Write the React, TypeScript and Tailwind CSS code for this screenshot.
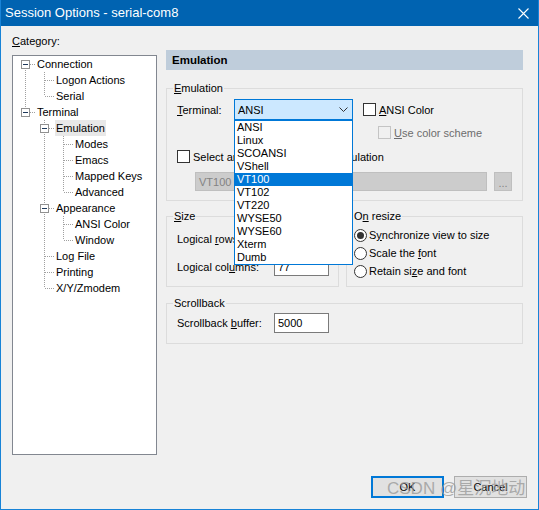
import React from 'react';

const FONT = { fontFamily: '"Liberation Sans", Arial, sans-serif' };

interface TreeRow {
  label: string;
  guides: boolean[];
  kind: 'first' | 'mid' | 'last';
  box?: boolean;
  selected?: boolean;
}

const treeRows: TreeRow[] = [
  { label: 'Connection', guides: [], kind: 'first', box: true },
  { label: 'Logon Actions', guides: [true], kind: 'mid' },
  { label: 'Serial', guides: [true], kind: 'last' },
  { label: 'Terminal', guides: [], kind: 'last', box: true },
  { label: 'Emulation', guides: [false], kind: 'mid', box: true, selected: true },
  { label: 'Modes', guides: [false, true], kind: 'mid' },
  { label: 'Emacs', guides: [false, true], kind: 'mid' },
  { label: 'Mapped Keys', guides: [false, true], kind: 'mid' },
  { label: 'Advanced', guides: [false, true], kind: 'last' },
  { label: 'Appearance', guides: [false], kind: 'mid', box: true },
  { label: 'ANSI Color', guides: [false, true], kind: 'mid' },
  { label: 'Window', guides: [false, true], kind: 'last' },
  { label: 'Log File', guides: [false], kind: 'mid' },
  { label: 'Printing', guides: [false], kind: 'mid' },
  { label: 'X/Y/Zmodem', guides: [false], kind: 'last' },
];

const terminals = ['ANSI', 'Linux', 'SCOANSI', 'VShell', 'VT100', 'VT102', 'VT220', 'WYSE50', 'WYSE60', 'Xterm', 'Dumb'];

// one 19px column of the tree's dotted connector lines
function GuideCell({ through }: { through: boolean }) {
  return (
    <svg width="19" height="16" className="shrink-0">
      {through && <line x1="8.5" y1="0" x2="8.5" y2="16" stroke="#a0a0a0" strokeDasharray="1 1" />}
    </svg>
  );
}

function NodeCell({ kind, box }: { kind: TreeRow['kind']; box?: boolean }) {
  const top = kind === 'first' ? 8 : 0;
  const bottom = kind === 'last' ? 8 : 16;
  return (
    <svg width="19" height="16" className="shrink-0">
      <line x1="8.5" y1={top} x2="8.5" y2={bottom} stroke="#a0a0a0" strokeDasharray="1 1" />
      <line x1={box ? 13 : 9} y1="8.5" x2="19" y2="8.5" stroke="#a0a0a0" strokeDasharray="1 1" />
      {box && (
        <>
          <rect x="4.5" y="4.5" width="8" height="8" fill="#fff" stroke="#919191" />
          <line x1="6" y1="8.5" x2="11" y2="8.5" stroke="#1e395b" />
        </>
      )}
    </svg>
  );
}

function Checkbox({ disabled, className }: { disabled?: boolean; className?: string }) {
  return (
    <span
      className={`inline-block w-[13px] h-[13px] shrink-0 border ${
        disabled ? 'border-[#c4c4c4] bg-[#f0f0f0]' : 'border-[#333] bg-white'
      } ${className ?? ''}`}
    />
  );
}

function Radio({ checked }: { checked?: boolean }) {
  return (
    <svg width="13" height="13" className="shrink-0">
      <circle cx="6.5" cy="6.5" r="6" fill="#fff" stroke="#333" />
      {checked && <circle cx="6.5" cy="6.5" r="3.5" fill="#333" />}
    </svg>
  );
}

function Group({ title, className, children }: { title: React.ReactNode; className?: string; children: React.ReactNode }) {
  return (
    <fieldset className={`border border-[#dcdcdc] m-0 p-0 min-w-0 ${className ?? ''}`}>
      <legend className="ml-[6px] px-[1px] leading-4">{title}</legend>
      {children}
    </fieldset>
  );
}

export default function App() {
  return (
    <div
      className="relative w-[539px] h-[510px] flex flex-col bg-[#f0f0f0] border-x border-b border-[#1883d7] text-[11px] leading-4 text-black overflow-hidden"
      style={FONT}
    >
      {/* Title bar */}
      <div className="h-[26px] shrink-0 bg-[#0063b1] flex items-center justify-between pl-[4px] pr-[9px]">
        <span className="text-white text-[13px]">Session Options - serial-com8</span>
        <svg width="11" height="11" viewBox="0 0 11 11">
          <path d="M0.5 0.5 L10.5 10.5 M10.5 0.5 L0.5 10.5" stroke="#fff" strokeWidth="1.1" />
        </svg>
      </div>

      <div className="flex pl-[11px]">
        {/* Category tree */}
        <div className="w-[145px] shrink-0">
          <div className="mt-[7px]">
            <u>C</u>ategory:
          </div>
          <div className="mt-[6px] h-[400px] bg-white border border-[#828790] pl-[4px]">
            {treeRows.map((row) => (
              <div key={row.label} className="flex h-4 items-center">
                {row.guides.map((g, i) => (
                  <GuideCell key={i} through={g} />
                ))}
                <NodeCell kind={row.kind} box={row.box} />
                <span className={`px-[1px] leading-4 whitespace-nowrap ${row.selected ? 'bg-[#e8e8e8]' : ''}`}>
                  {row.label}
                </span>
              </div>
            ))}
          </div>
        </div>

        {/* Options panel */}
        <div className="ml-[9px] w-[357px] shrink-0">
          <div className="mt-[24px] h-[20px] bg-[#bfcddb] pl-[6px] flex items-center font-bold text-[11.5px]">
            Emulation
          </div>

          <Group title={<><u>E</u>mulation</>} className="mt-[10px]">
            <div className="pl-[10px] pb-[9px]">
              <div className="mt-[3px] h-[21px] flex items-center">
                <span className="w-[57px]">
                  <u>T</u>erminal:
                </span>
                <div className="relative w-[119px] h-[21px]">
                  <div className="h-full flex items-center border border-[#0078d7] bg-[#cce8ff] pl-[3px] pr-[4px]">
                    <span>ANSI</span>
                    <svg width="9" height="5" className="ml-auto">
                      <path d="M0.5 0.5 L4.5 4.5 L8.5 0.5" fill="none" stroke="#333" />
                    </svg>
                  </div>
                  {/* open drop-down list */}
                  <div className="absolute left-0 top-[21px] z-10 w-[119px] bg-white border border-[#0078d7]">
                    {terminals.map((t) => (
                      <div
                        key={t}
                        className={`h-[13px] leading-[13px] pl-[2px] ${t === 'VT100' ? 'bg-[#0078d7] text-white' : ''}`}
                      >
                        {t}
                      </div>
                    ))}
                  </div>
                </div>
                <Checkbox className="ml-[10px]" />
                <span className="ml-[3px]">
                  <u>A</u>NSI Color
                </span>
              </div>
              <div className="mt-[6px] h-[13px] flex items-center ml-[201px]">
                <Checkbox disabled />
                <span className="ml-[3px] text-[#6d6d6d]">
                  <u>U</u>se color scheme
                </span>
              </div>
              <div className="mt-[11px] h-[13px] flex items-center">
                <Checkbox />
                <span className="ml-[3px] whitespace-nowrap">Select an alternate keyboard emulation</span>
              </div>
              <div className="mt-[9px] h-[19px] flex ml-[18px]">
                <div className="w-[292px] h-full flex items-center bg-[#cccccc] border border-[#bfbfbf] pl-[3px] text-[#838383]">
                  VT100
                </div>
                <div className="ml-[7px] w-[18px] h-full bg-[#cccccc] border border-[#bfbfbf] text-[#838383] flex items-end justify-center leading-[14px]">
                  ...
                </div>
              </div>
            </div>
          </Group>

          <div className="mt-[7px] flex items-stretch gap-[7px]">
            <Group title={<><u>S</u>ize</>} className="w-[173px]">
              <div className="pl-[10px] pb-[10px]">
                <div className="mt-[5px] h-[19px] flex items-center">
                  <span className="w-[97px]">
                    Logical <u>r</u>ows:
                  </span>
                  <div className="w-[55px] h-full bg-white border border-[#7a7a7a] pl-[3px] flex items-center">24</div>
                </div>
                <div className="mt-[9px] h-[19px] flex items-center">
                  <span className="w-[97px]">
                    Logical col<u>u</u>mns:
                  </span>
                  <div className="w-[55px] h-full bg-white border border-[#7a7a7a] pl-[3px] flex items-center">77</div>
                </div>
              </div>
            </Group>
            <Group title={<>O<u>n</u> resize</>} className="w-[177px]">
              <div className="pl-[7px] mt-[2px]">
                <div className="h-[18px] flex items-center">
                  <Radio checked />
                  <span className="ml-[2px]">
                    S<u>y</u>nchronize view to size
                  </span>
                </div>
                <div className="h-[18px] flex items-center">
                  <Radio />
                  <span className="ml-[2px]">
                    Scale the <u>f</u>ont
                  </span>
                </div>
                <div className="h-[18px] flex items-center">
                  <Radio />
                  <span className="ml-[2px]">
                    Retain si<u>z</u>e and font
                  </span>
                </div>
              </div>
            </Group>
          </div>

          <Group title="Scrollback" className="mt-[8px]">
            <div className="pl-[10px] pb-[10px]">
              <div className="mt-[2px] h-[20px] flex items-center">
                <span className="w-[97px]">
                  Scrollback <u>b</u>uffer:
                </span>
                <div className="w-[55px] h-full bg-white border border-[#7a7a7a] pl-[3px] flex items-center">5000</div>
              </div>
            </div>
          </Group>
        </div>
      </div>

      <div className="flex-1" />

      {/* Dialog buttons */}
      <div className="flex justify-end gap-[10px] pr-[11px] pb-[11px]">
        <button className="w-[73px] h-[22px] bg-[#e1e1e1] border-2 border-[#0078d7] flex items-center justify-center">
          OK
        </button>
        <button className="w-[73px] h-[22px] bg-[#e1e1e1] border border-[#adadad] flex items-center justify-center">
          Cancel
        </button>
      </div>

      {/* watermark over the buttons */}
      <div
        className="absolute left-[386px] top-[479px] text-[17px] leading-5 text-[#9a9a9a]/80 whitespace-nowrap pointer-events-none"
        style={{ fontFamily: '"Liberation Sans", "Noto Sans CJK SC", sans-serif' }}
      >
        CSDN @星沉地动
      </div>
    </div>
  );
}
